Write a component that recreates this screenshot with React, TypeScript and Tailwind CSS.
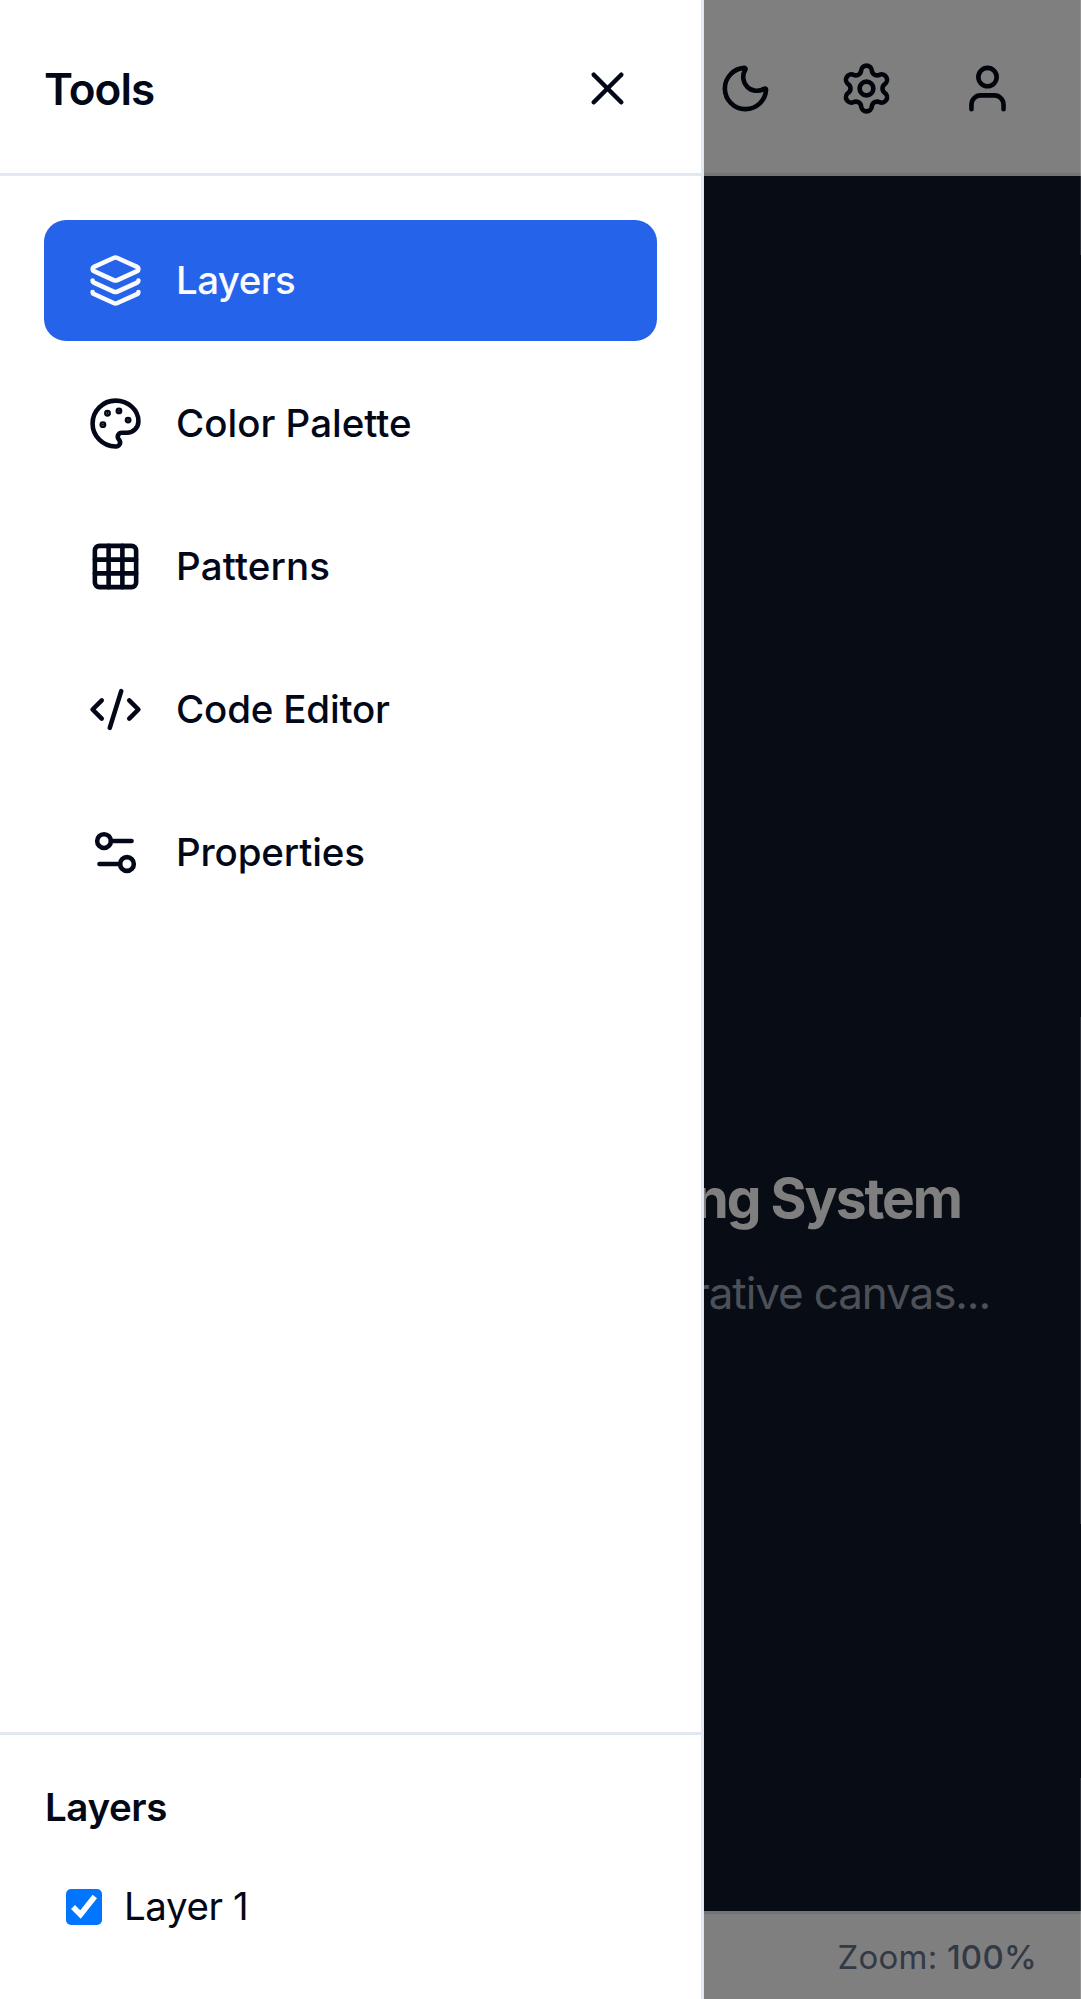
import { useState, type ReactNode } from "react";
import { CodeXml, Grid3x3, Layers, Moon, Palette, Settings, Settings2, User, X, type LucideIcon } from "lucide-react";

const tools: { label: string; icon: LucideIcon; tracking: string }[] = [
  { label: "Layers", icon: Layers, tracking: "tracking-[-0.6px]" },
  { label: "Color Palette", icon: Palette, tracking: "tracking-[0px]" },
  { label: "Patterns", icon: Grid3x3, tracking: "tracking-[0.15px]" },
  { label: "Code Editor", icon: CodeXml, tracking: "tracking-[-0.18px]" },
  { label: "Properties", icon: Settings2, tracking: "tracking-[-0.15px]" },
];

function IconButton({ label, children }: { label: string; children: ReactNode }) {
  return (
    <button aria-label={label} className="flex size-[99px] items-center justify-center rounded-[16px]">
      {children}
    </button>
  );
}

function Checkbox() {
  return (
    <span role="checkbox" aria-checked="true" className="flex size-9 shrink-0 rounded-[5px] bg-[#0075ff]">
      <svg viewBox="0 0 36 36" className="size-9" fill="none" stroke="white" strokeWidth="5.6">
        <path d="M7 18 L14.5 25.5 L28.8 7.4" />
      </svg>
    </span>
  );
}

export default function App() {
  const [active, setActive] = useState("Layers");

  return (
    <div className="relative h-[1999px] w-[1081px] overflow-hidden bg-white font-['Inter',sans-serif] text-[#020817]">
      <div className="flex h-full flex-col">
        <header className="flex h-[176px] shrink-0 items-center justify-end gap-[22px] border-b-[3px] border-[#e2e8f0] px-[44px] pt-[3px]">
          <IconButton label="Theme"><Moon className="size-[55px]" /></IconButton>
          <IconButton label="Settings"><Settings className="size-[55px]" /></IconButton>
          <IconButton label="Account"><User className="size-[55px]" /></IconButton>
        </header>
        <main className="flex grow flex-col items-end justify-center bg-gray-900 pt-[399px]">
          <h2 className="mb-[23px] mr-[120px] text-[55px] leading-[77px] font-bold tracking-[-2px] text-white">Painting System</h2>
          <p className="mr-[91px] text-[44px] leading-[66px] tracking-[-1.1px] text-gray-400">generative canvas...</p>
        </main>
        <footer className="flex h-[88px] shrink-0 items-center justify-end border-t-[3px] border-[#e2e8f0] px-[44px] text-[33px] leading-[44px] tracking-[0.25px] text-[#64748b]">
          <span>Zoom: <span className="font-medium">100%</span></span>
        </footer>
      </div>

      <div className="absolute inset-0 bg-black/50" />

      <div className="absolute inset-y-0 right-0 flex w-px flex-col">
        <div className="h-[255px] bg-white/15" />
        <div className="mt-[762px] h-[507px] bg-white/15" />
        <div className="mt-[254px] grow bg-white/15" />
      </div>

      <aside className="absolute inset-y-0 left-0 flex w-[704px] flex-col border-r-[3px] border-[#e2e8f0] bg-white">
        <div className="flex h-[176px] shrink-0 items-center justify-between border-b-[3px] border-[#e2e8f0] px-[44px] pt-[3px]">
          <h2 className="pt-[2px] text-[44px] leading-[66px] font-semibold tracking-[-0.9px]">Tools</h2>
          <IconButton label="Close"><X className="size-[55px]" /></IconButton>
        </div>
        <nav className="flex grow flex-col gap-[22px] p-[44px]">
          {tools.map(({ label, icon: Icon, tracking }) => (
            <button
              key={label}
              onClick={() => setActive(label)}
              className={`flex h-[121px] items-center gap-[33px] rounded-[22px] px-[44px] text-[38.5px] leading-[55px] font-medium ${tracking} ${
                active === label ? "bg-[#2563eb] text-[#f8fafc]" : ""
              }`}
            >
              <Icon className="size-[55px]" />
              {label}
            </button>
          ))}
        </nav>
        <section className="border-t-[3px] border-[#e2e8f0] px-[44px] pt-[45px] pb-[43px] text-[38.5px] leading-[55px]">
          <h3 className="mb-[22px] pl-px font-semibold tracking-[-0.4px]">Layers</h3>
          <label className="flex items-center gap-[22px] p-[22px]">
            <Checkbox />
            <span className="tracking-[-0.4px]">Layer 1</span>
          </label>
        </section>
      </aside>
    </div>
  );
}
